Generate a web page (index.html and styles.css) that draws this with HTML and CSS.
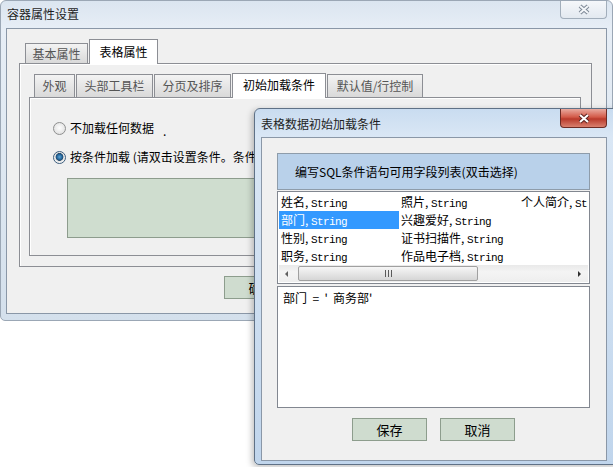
FILE: index.html
```html
<!DOCTYPE HTML>
<html>
<head>
    <meta charset="utf-8">
    <title>容器属性设置</title>
    <link rel="stylesheet" href="styles.css">
</head>
<body>

<div class="win main">
    <div class="cap">
        <span class="cap-title">容器属性设置</span>
        <span class="cap-close">
            <svg width="14" height="11" viewBox="0 0 14 11">
                <path d="M3 2L11 9M11 2L3 9" stroke="#7d8896" stroke-width="4"/>
                <path d="M3 2L11 9M11 2L3 9" stroke="#f3f6f9" stroke-width="2"/>
            </svg>
        </span>
    </div>
    <div class="client">
        <div class="tab-row outer-row">
            <span class="tab">基本属性</span>
            <span class="tab on">表格属性</span>
        </div>
        <div class="panel outer-panel">
            <div class="tab-row inner-row">
                <span class="tab t-look">外观</span>
                <span class="tab t-bar">头部工具栏</span>
                <span class="tab t-page">分页及排序</span>
                <span class="tab on t-init">初始加载条件</span>
                <span class="tab t-def">默认值/行控制</span>
            </div>
            <div class="panel inner-panel">
                <div class="opt">
                    <span class="radio"></span>
                    <span>不加载任何数据</span><span class="dot">.</span>
                </div>
                <div class="opt">
                    <span class="radio checked"></span>
                    <span>按条件加载 (请双击设置条件。条件为空时加载全部数据)</span>
                </div>
                <div class="cond-box"></div>
            </div>
        </div>
        <div class="btn-row">
            <span class="btn">确定</span>
            <span class="btn">取消</span>
        </div>
    </div>
</div>

<!-- modal dialog on top of the property window -->
<div class="win dlg">
    <div class="cap">
        <span class="cap-title">表格数据初始加载条件</span>
        <span class="cap-close red">
            <svg width="14" height="11" viewBox="0 0 14 11">
                <path d="M3 2L11 9M11 2L3 9" stroke="#5e2420" stroke-width="4"/>
                <path d="M3 2L11 9M11 2L3 9" stroke="#ffffff" stroke-width="2"/>
            </svg>
        </span>
    </div>
    <div class="client dlg-client">
        <div class="hint">编写SQL条件语句可用字段列表(双击选择)</div>
        <div class="list">
            <div class="cols">
                <span class="item">姓名, <i>String</i></span>
                <span class="item sel">部门, <i>String</i></span>
                <span class="item">性别, <i>String</i></span>
                <span class="item">职务, <i>String</i></span>
                <span class="item">照片, <i>String</i></span>
                <span class="item">兴趣爱好, <i>String</i></span>
                <span class="item">证书扫描件, <i>String</i></span>
                <span class="item">作品电子档, <i>String</i></span>
                <span class="item">个人简介, <i>String</i></span>
            </div>
            <div class="hscroll">
                <span class="arrow left"></span>
                <span class="track"><span class="thumb"><span class="grip"></span></span></span>
                <span class="arrow right"></span>
            </div>
        </div>
        <div class="sql">部门  =  '  商务部'</div>
        <div class="btn-row dlg-btns">
            <span class="btn">保存</span>
            <span class="btn">取消</span>
        </div>
    </div>
</div>

</body>
</html>
```

FILE: styles.css
```css
html, body {
    margin: 0;
    padding: 0;
}

body {
    width: 613px;
    height: 467px;
    overflow: hidden;
    position: relative;
    background: #fff;
    font: 12px/16px "Noto Sans CJK SC", sans-serif;
    color: #000;
}

/* window frames */
.win {
    box-sizing: border-box;
    display: flex;
    flex-direction: column;
}

.main {
    width: 613px;
    height: 321px;
    border: 1px solid #9ba7b5;
    border-radius: 6px 6px 5px 5px;
    background: linear-gradient(#dbe5f0, #e7eef6 28px, #d4e0ec);
}

.dlg {
    position: absolute;
    left: 254px;
    top: 108px;
    width: 366px;
    height: 357px;
    border: 1px solid #5f7186;
    border-radius: 6px 6px 5px 5px;
    background: linear-gradient(#c9dcf0, #dae7f5 28px, #c0d5ec);
    box-shadow: -2px 2px 6px rgba(0, 0, 0, 0.25);
}

.cap {
    height: 27px;
    flex: none;
    display: flex;
    align-items: flex-start;
}

.dlg .cap {
    height: 28px;
}

.cap-title {
    padding-left: 6px;
    line-height: 26px;
    color: #1e1e1e;
}

.dlg .cap-title {
    line-height: 29px;
}

.cap-close {
    margin-left: auto;
    margin-right: 5px;
    width: 45px;
    height: 17px;
    border: 1px solid #a2aebb;
    border-top: none;
    border-radius: 0 0 4px 4px;
    background: linear-gradient(#f5f7fa, #e3e9f0);
    display: flex;
    align-items: center;
    justify-content: center;
}

.cap-close.red {
    margin-right: 12px;
    height: 18px;
    border: 1px solid #6d2b24;
    border-top: none;
    background: linear-gradient(#e9aa9f, #d35a48 45%, #b93a2b 55%, #d9806f);
}

.client {
    flex: 1;
    margin: 0 5px 6px 5px;
    border: 1px solid #8a97a7;
    background: #f0f0f0;
    padding: 10px 14px 0 12px;
    display: flex;
    flex-direction: column;
}

/* tab controls */
.tab-row {
    display: flex;
    align-items: flex-end;
    height: 24px;
    flex: none;
}

.outer-row {
    padding-left: 6px;
}

.inner-row {
    padding-left: 5px;
}

.tab {
    box-sizing: border-box;
    height: 20px;
    padding: 0 6px;
    margin-right: 1px;
    border: 1px solid #8c8e94;
    border-bottom: none;
    background: linear-gradient(#f3f3f3, #e6e6e6 50%, #d9d9d9);
    color: #555;
    line-height: 19px;
    text-align: center;
    white-space: nowrap;
}

.inner-row .tab {
    height: 23px;
    line-height: 22px;
}

.tab.on {
    position: relative;
    height: 25px;
    margin-bottom: -1px;
    background: #fff;
    color: #000;
    line-height: 23px;
}

.inner-row .tab.on {
    height: 25px;
    line-height: 22px;
}

.outer-row .tab {
    width: 63px;
}

.outer-row .tab.on {
    width: 69px;
}

.t-look { width: 41px; }
.t-bar { width: 77px; }
.t-page { width: 77px; }
.t-init { width: 94px; }
.t-def { width: 96px; }

.panel {
    box-sizing: border-box;
    border: 1px solid #8c8e94;
    box-shadow: inset 1px 1px 0 #fff;
}

.outer-panel {
    height: 204px;
    padding: 9px 10px 10px 9px;
    display: flex;
    flex-direction: column;
}

.inner-panel {
    flex: 1;
    padding: 22px 0 0 23px;
}

.opt {
    display: flex;
    align-items: center;
    height: 16px;
    margin-bottom: 13px;
    white-space: nowrap;
}

.radio {
    box-sizing: border-box;
    width: 13px;
    height: 13px;
    margin-right: 4px;
    border: 1px solid #8e8f8f;
    border-radius: 50%;
    background: radial-gradient(circle at 50% 45%, #fdfdfd, #d9d9d9);
}

.radio.checked {
    border-color: #3c5d7d;
    background: radial-gradient(circle at 50% 45%, #5aa6dc 0, #1d5a8c 3px, #2d4d6a 3.6px, #e2e2e2 4.2px, #fafafa 6px);
}

.dot {
    margin-left: 9px;
    position: relative;
    top: 3px;
}

.cond-box {
    width: 493px;
    height: 60px;
    margin-left: 14px;
    box-sizing: border-box;
    border: 1px solid #8d9c8d;
    background: #cfddcf;
}

/* buttons */
.btn-row {
    display: flex;
    justify-content: center;
    gap: 13px;
    margin-top: 9px;
}

.btn {
    box-sizing: border-box;
    width: 75px;
    height: 23px;
    border: 1px solid #8d9d8d;
    background: #cfdccf;
    text-align: center;
    line-height: 21px;
    font-size: 13px;
}

/* condition dialog */
.dlg .client {
    margin: 0 12px 3px 6px;
    padding: 15px 16px 0 15px;
}

.hint {
    box-sizing: border-box;
    height: 37px;
    border: 1px solid #8e9caa;
    background: #b9d1ea;
    padding-left: 17px;
    line-height: 35px;
}

.list {
    box-sizing: border-box;
    height: 93px;
    margin-top: 1px;
    border: 1px solid #828790;
    background: #fff;
    padding: 1px;
    display: flex;
    flex-direction: column;
    overflow: hidden;
}

.cols {
    display: grid;
    grid-template-rows: repeat(4, 18px);
    grid-auto-flow: column;
    grid-auto-columns: 120px;
    overflow: hidden;
}

.item {
    padding-left: 2px;
    line-height: 18px;
    white-space: nowrap;
}

.item i {
    font: normal 11px/18px "Liberation Mono", monospace;
    letter-spacing: -0.6px;
}

.item.sel {
    background: #3399ff;
    color: #fff;
}

.hscroll {
    height: 17px;
    display: flex;
    align-items: stretch;
    background: linear-gradient(#e9e9e9, #f4f4f4 40%, #eeeeee);
}

.arrow {
    width: 17px;
    display: flex;
    align-items: center;
    justify-content: center;
}

.arrow::before {
    content: "";
    border: 3px solid transparent;
}

.arrow.left::before {
    border-right: 3px solid #606060;
    margin-right: 6px;
}

.arrow.right::before {
    border-left: 3px solid #303030;
    margin-left: 2px;
}

.track {
    flex: 1;
    padding: 1px 0;
    display: flex;
}

.thumb {
    box-sizing: border-box;
    width: 180px;
    margin-left: 2px;
    border: 1px solid #a0a0a0;
    border-radius: 2px;
    background: linear-gradient(#f6f6f6, #e6e6e6 50%, #d6d6d6);
    display: flex;
    align-items: center;
    justify-content: center;
}

.grip {
    width: 7px;
    height: 7px;
    background: repeating-linear-gradient(90deg, #5a5a5a 0 1px, transparent 1px 3px);
}

.sql {
    box-sizing: border-box;
    height: 122px;
    margin-top: 2px;
    border: 1px solid #828790;
    background: #fff;
    padding: 3px 5px;
    white-space: pre;
}

.dlg-btns {
    margin-top: 10px;
}
```
